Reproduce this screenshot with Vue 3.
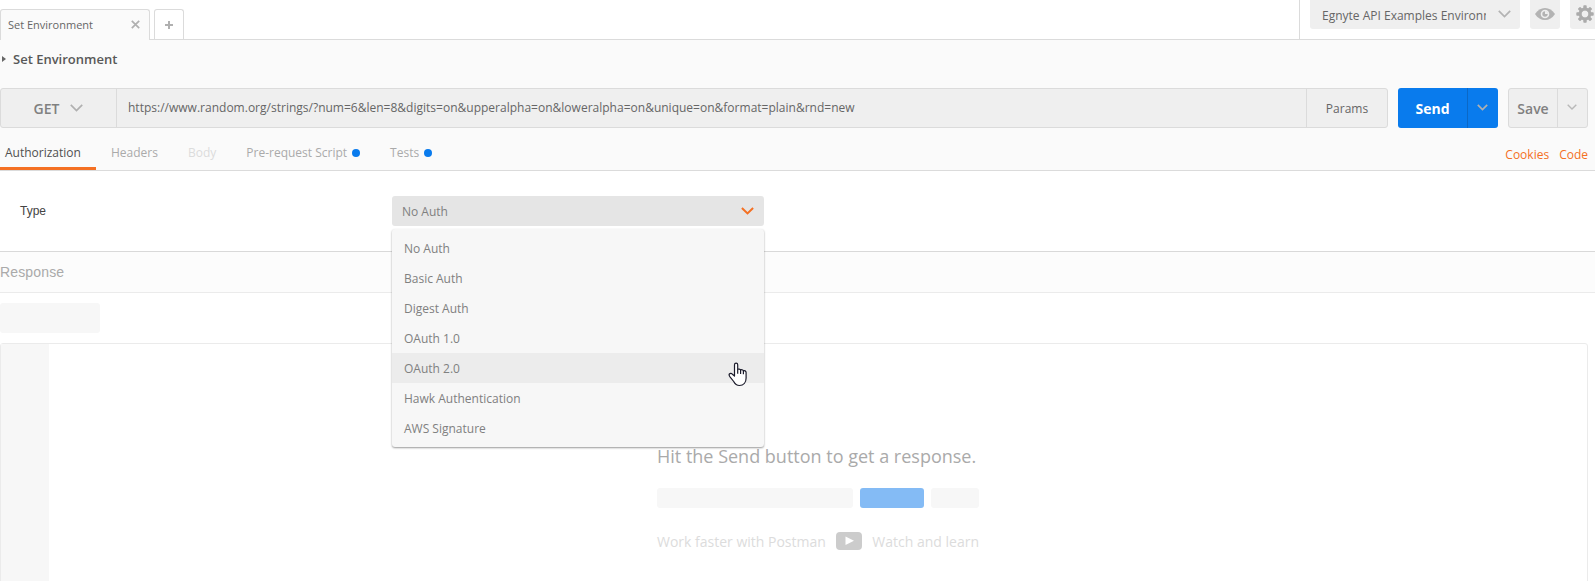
<script setup>
const tabs = [
  { label: 'Authorization', cls: 'active' },
  { label: 'Headers', cls: '' },
  { label: 'Body', cls: 'disabled' },
  { label: 'Pre-request Script', cls: '', dot: true },
  { label: 'Tests', cls: '', dot: true },
]
const authTypes = ['No Auth', 'Basic Auth', 'Digest Auth', 'OAuth 1.0', 'OAuth 2.0', 'Hawk Authentication', 'AWS Signature']
const hovered = 'OAuth 2.0'
const gearTeeth = [0, 45, 90, 135, 180, 225, 270, 315]
</script>

<template>
  <div class="app">
    <header class="topbar">
      <div class="tab-list">
        <div class="tab">
          <span>Set Environment</span>
          <svg class="close" width="9" height="9" viewBox="0 0 9 9"><path d="M.8 .8 8.2 8.2M8.2 .8 .8 8.2" stroke="#b0b0b0" stroke-width="1.7" fill="none" /></svg>
        </div>
        <div class="tab-add">
          <svg width="8" height="8" viewBox="0 0 8 8"><path d="M4 0V8M0 4H8" stroke="#b0b0b0" stroke-width="2" fill="none" /></svg>
        </div>
      </div>
      <div class="env">
        <div class="env-select">
          <span class="env-name">Egnyte API Examples Environment</span>
          <svg width="13" height="8" viewBox="0 0 13 8"><path d="M.8 .9 6.5 6.6 12.2 .9" stroke="#b3b3b3" stroke-width="1.7" fill="none" /></svg>
        </div>
        <div class="icon-btn">
          <svg width="20" height="12" viewBox="0 0 20 12">
            <path d="M0 6C2.6 2 6 0 10 0s7.400 2 10 6c-2.600 4-6 6-10 6S2.600 10 0 6Z" fill="#b3b3b3" />
            <circle cx="10" cy="6" r="4.300" fill="#efefef" />
            <circle cx="10" cy="6" r="2.700" fill="#b3b3b3" />
            <path d="M10 3V6H13A3 3 0 0 0 10 3Z" fill="#efefef" />
          </svg>
        </div>
        <div class="icon-btn">
          <svg width="18" height="18" viewBox="-9 -9 18 18">
            <rect v-for="a in gearTeeth" :key="a" x="-1.700" y="-8.700" width="3.400" height="5" rx=".8" fill="#ababab" :transform="`rotate(${a})`" />
            <circle r="4.900" fill="none" stroke="#ababab" stroke-width="3" />
          </svg>
        </div>
      </div>
    </header>

    <section class="request">
      <div class="title">
        <i class="caret"></i>
        <span>Set Environment</span>
      </div>
      <div class="url-row">
        <div class="url-bar">
          <div class="method">
            <span>GET</span>
            <svg width="13" height="8" viewBox="0 0 13 8"><path d="M.8 .9 6.5 6.600 12.200 .9" stroke="#b0b0b0" stroke-width="1.700" fill="none" /></svg>
          </div>
          <div class="url">https://www.random.org/strings/?num=6&amp;len=8&amp;digits=on&amp;upperalpha=on&amp;loweralpha=on&amp;unique=on&amp;format=plain&amp;rnd=new</div>
          <div class="params">Params</div>
        </div>
        <div class="split send">
          <span>Send</span>
          <b><svg width="11" height="7" viewBox="0 0 11 7"><path d="M.8 .9 5.500 5.600 10.200 .9" stroke="#b0b0b0" stroke-width="1.700" fill="none" /></svg></b>
        </div>
        <div class="split save">
          <span>Save</span>
          <b><svg width="10" height="6" viewBox="0 0 10 6"><path d="M.7 .7 5 5 9.300 .7" stroke="#b8b8b8" stroke-width="1.400" fill="none" /></svg></b>
        </div>
      </div>
      <nav class="subtabs">
        <div v-for="t in tabs" :key="t.label" class="subtab" :class="t.cls">
          <span>{{ t.label }}</span><i v-if="t.dot" class="dot"></i>
        </div>
        <div class="links"><span>Cookies</span><span>Code</span></div>
      </nav>
    </section>

    <section class="auth">
      <label>Type</label>
      <div class="select">
        <span>No Auth</span>
        <svg width="13" height="8" viewBox="0 0 13 8"><path d="M.9 1 6.500 6.400 12.100 1" stroke="#f47023" stroke-width="2" fill="none" /></svg>
        <ul class="menu">
          <li v-for="a in authTypes" :key="a" :class="{ hovered: a === hovered }">{{ a }}</li>
          <svg class="cursor" width="20" height="25" viewBox="0 0 20 25">
            <path d="M6.500 14V2.800a1.500 1.500 0 0 1 3.200 0V7.500c.7-.8 2.500-.6 2.900.5.8-.6 2.400-.3 2.700.8 1.200-.5 2.800.1 2.800 1.700v5.500c0 4.400-2.600 7.500-6.600 7.500-3 0-4.600-1.600-5.800-4L1.600 14.300c-.6-1-.7-1.700-.2-2.300.7-.8 2.100-.7 3 .2Z" fill="#fff" stroke="#1b1b2b" stroke-width="1.200" stroke-linejoin="round" />
            <path d="M9.700 7.500v4.300M12.600 8v4M15.400 9v3.300" fill="none" stroke="#1b1b2b" stroke-width="1.200" />
          </svg>
        </ul>
      </div>
    </section>

    <section class="response-head">Response</section>
    <section class="response">
      <div class="ghost-tab"></div>
      <div class="viewer">
        <div class="gutter"></div>
        <div class="empty">
          <div class="hint">
            <h2>Hit the Send button to get a response.</h2>
            <div class="bars"><i class="b1"></i><i class="b2"></i><i class="b3"></i></div>
            <div class="learn">
              <span>Work faster with Postman</span>
              <svg width="26" height="18" viewBox="0 0 26 18"><rect width="26" height="18" rx="4" fill="#ccc" /><path d="M9.500 4.500V13L18 8.700Z" fill="#fff" /></svg>
              <span>Watch and learn</span>
            </div>
          </div>
        </div>
      </div>
    </section>
  </div>
</template>

<style>
html, body { overflow: hidden; }
</style>

<style scoped>
* { box-sizing: border-box; }
.app { width: 1595px; height: 581px; overflow: hidden; background: #fff; font: 12px/18px "Open Sans", sans-serif; color: #666; display: flex; flex-direction: column; white-space: nowrap; }
svg { display: block; flex: none; }
.topbar { height: 40px; flex: none; display: flex; justify-content: space-between; border-bottom: 1px solid #dbdbdb; }
.tab-list { display: flex; gap: 4px; padding-top: 9px; }
.tab { width: 150px; height: 31px; border: 1px solid #dbdbdb; border-bottom: 0; border-radius: 3px 3px 0 0; background: #fafafa; display: flex; align-items: center; justify-content: space-between; padding: 0 9px 0 7px; font-size: 11px; }
.close { margin-bottom: 1px; }
.tab-add { width: 30px; height: 30px; border: 1px solid #dbdbdb; border-bottom: 0; border-radius: 3px 3px 0 0; display: flex; align-items: center; justify-content: center; padding-top: 1px; }
.env { width: 296px; flex: none; border-left: 1px solid #dbdbdb; display: flex; gap: 10px; padding-left: 10px; overflow: hidden; }
.env-select { width: 210px; height: 29px; flex: none; background: #efefef; border-radius: 0 0 3px 3px; display: flex; justify-content: space-between; padding: 7px 9px 0 12px; }
.env-name { width: 164px; overflow: hidden; }
.env-select svg { margin-top: 3px; }
.icon-btn { width: 30px; height: 29px; flex: none; background: #efefef; border-radius: 0 0 3px 3px; display: flex; align-items: center; justify-content: center; padding-bottom: 2px; }
.request { height: 131px; flex: none; background: #fafafa; border-bottom: 1px solid #dbdbdb; display: flex; flex-direction: column; }
.title { height: 48px; display: flex; align-items: center; gap: 7px; padding: 0 0 10px 2px; font-size: 13px; font-weight: 600; color: #585858; }
.caret { border-left: 4px solid #666; border-top: 3.500px solid transparent; border-bottom: 3.500px solid transparent; }
.url-row { display: flex; gap: 10px; height: 40px; }
.url-bar { width: 1388px; display: flex; background: #efefef; border: 1px solid #dbdbdb; border-radius: 3px; }
.method { width: 116px; border-right: 1px solid #dbdbdb; display: flex; align-items: center; justify-content: center; gap: 11px; font-size: 14px; font-weight: 600; color: #808080; }
.method span { padding-top: 2px; }
.url { flex: 1; padding: 10px 0 0 11px; letter-spacing: .008px; }
.params { width: 81px; border-left: 1px solid #dbdbdb; display: flex; align-items: center; justify-content: center; padding-top: 2px; }
.split { display: flex; border-radius: 3px; font-size: 14px; }
.split span { flex: 1; display: flex; align-items: center; justify-content: center; padding-top: 2px; }
.split b { display: flex; align-items: center; justify-content: center; padding: 0 2px 2px 0; }
.send { width: 100px; background: #097bed; color: #fff; font-weight: 700; }
.send b { width: 31px; border-left: 1px solid #0b68c6; }
.save { width: 80px; background: #efefef; border: 1px solid #dbdbdb; color: #808080; font-weight: 600; }
.save b { width: 30px; border-left: 1px solid #dbdbdb; }
.subtabs { display: flex; flex: 1; }
.subtab { display: flex; align-items: center; margin-right: 30px; color: #aaa; border-bottom: 3px solid transparent; padding-top: 11px; height: 42px; }
.subtab.active { color: #505050; width: 96px; padding-left: 5px; margin-right: 15px; border-color: #f47023; }
.subtab.disabled { color: #dcdcdc; }
.dot { width: 8px; height: 8px; border-radius: 50%; background: #097bed; margin-left: 5px; }
.links { margin-left: auto; padding: 18px 7px 0 0; display: flex; gap: 10px; color: #f47023; }
.auth { height: 81px; flex: none; border-bottom: 1px solid #d9d9d9; display: flex; padding: 25px 0 0 20px; }
.auth label { width: 372px; font: 12px/30px "Liberation Sans", sans-serif; color: #444; }
.select { position: relative; width: 372px; height: 30px; background: #e5e5e5; border-radius: 3px; display: flex; align-items: center; justify-content: space-between; padding: 0 10px; color: #808080; }
.select > span { padding-top: 2px; }
.menu { position: absolute; z-index: 2; top: 33px; left: 0; width: 372px; margin: 0; padding: 4px 0; list-style: none; background: #f7f7f7; border-radius: 3px; box-shadow: 0 1px 2px rgba(0,0,0,.4); }
.menu li { height: 30px; line-height: 32px; padding-left: 12px; }
.menu li.hovered { background: #ececec; }
.cursor { position: absolute; left: 336px; top: 133px; }
.response-head { height: 41px; flex: none; background: #fcfcfc; border-bottom: 1px solid #ebebeb; font: 14px/40px "Liberation Sans", sans-serif; letter-spacing: .15px; color: #aaa; }
.response { flex: 1; padding-top: 10px; display: flex; flex-direction: column; gap: 10px; }
.ghost-tab { width: 100px; height: 30px; background: #f7f7f7; border-radius: 3px; flex: none; }
.viewer { width: 1588px; height: 260px; flex: none; border: 1px solid #ebebeb; border-radius: 3px; display: flex; }
.gutter { width: 48px; background: #f7f7f7; }
.empty { flex: 1; display: flex; justify-content: center; padding-top: 98px; }
.hint { width: 322px; }
.hint h2 { margin: 0; font: 400 18px/28px "Open Sans", sans-serif; color: #aaa; }
.bars { display: flex; gap: 7px; margin-top: 18px; }
.bars i { height: 20px; background: #f7f7f7; border-radius: 3px; }
.bars .b1 { width: 196px; }
.bars .b2 { width: 64px; background: #84bbf5; }
.bars .b3 { width: 48px; }
.learn { display: flex; align-items: center; justify-content: space-between; margin-top: 24px; font-size: 14px; color: #dcdcdc; }
.learn span { padding-top: 1px; }
.learn svg { margin-bottom: 1px; }
</style>
